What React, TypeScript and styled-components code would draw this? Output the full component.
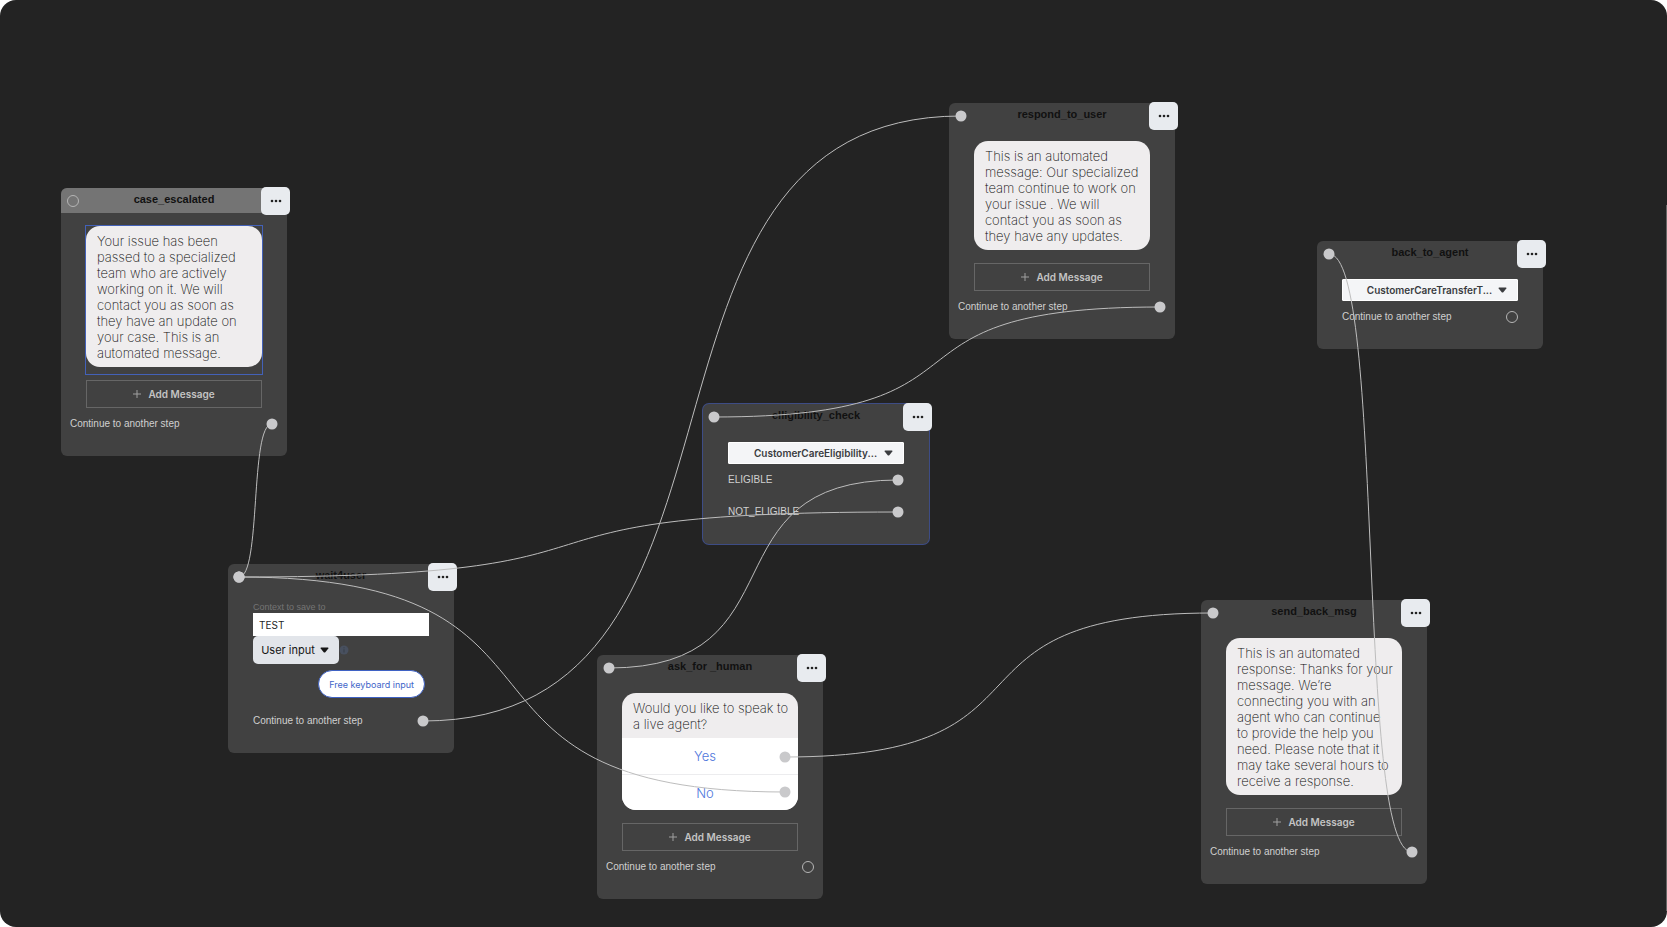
import React, { useId } from "react";
import styled, { createGlobalStyle, css } from "styled-components";

const GlobalStyle = createGlobalStyle`
  *, *::before, *::after { box-sizing: border-box; }
  html, body { margin: 0; background: #ffffff; }
  button, input, select { font: inherit; margin: 0; }
`;

const sans = `"Liberation Sans", Arial, sans-serif`;
const inter = `Inter, "Liberation Sans", sans-serif`;

const Canvas = styled.main`
  position: relative;
  min-height: 100vh;
  overflow: hidden;
  border-radius: 16px;
  background: #232323;
  font-family: ${sans};
`;

const ScrollEdge = styled.div`
  position: absolute;
  top: 205px;
  right: 0;
  bottom: 16px;
  width: 1px;
  background: #666666;
`;

const Node = styled.section<{ $x: number; $y: number; $selected?: boolean }>`
  position: absolute;
  left: ${(p) => p.$x}px;
  top: ${(p) => p.$y}px;
  width: 226px;
  padding-bottom: 24px;
  border-radius: 6px;
  background: #414141;
  ${(p) => p.$selected && css`box-shadow: 0 0 0 1px #3d4c85;`}
`;

const NodeHeader = styled.header<{ $active?: boolean }>`
  display: flex;
  align-items: center;
  justify-content: center;
  height: 25px;
  padding-bottom: 4px;
  border-radius: 6px 6px 0 0;
  background: ${(p) => (p.$active ? "#747474" : "transparent")};
`;

const NodeTitle = styled.h2`
  margin: 0;
  font-size: 11px;
  line-height: 14px;
  font-weight: 700;
  color: #111111;
`;

const MenuButton = styled.button`
  position: absolute;
  top: -1px;
  right: -3px;
  display: flex;
  align-items: center;
  justify-content: center;
  width: 29px;
  height: 28px;
  padding: 0;
  border: 0;
  border-radius: 5px;
  background: #e8ebef;
`;

const NodeBody = styled.div`
  display: flex;
  flex-direction: column;
  padding: 13px 25px 0;
`;

const Bubble = styled.div`
  overflow: hidden;
  border-radius: 14px;
  background: #efedee;
  color: #0c0c0c;
  font-family: ${inter};
  font-weight: 200;
  font-size: 13px;
  line-height: 16px;
`;

const BubbleFrame = styled.div<{ $selected?: boolean }>`
  ${(p) => p.$selected && css`
    outline: 1px solid #4361b8;
    margin-bottom: -7px;
    padding-bottom: 7px;
  `}
`;

const BubbleText = styled.p`
  margin: 0;
  padding: 7px 8px 6px 11px;
`;

const Choice = styled.button`
  display: block;
  width: 100%;
  height: 36px;
  padding: 0 10px 0 0;
  border: 0;
  background: #ffffff;
  color: #4f76dc;
  font-weight: 300;
  & + & { border-top: 1px solid #ececee; }
`;

const AddButton = styled.button`
  display: flex;
  align-items: center;
  justify-content: center;
  gap: 7px;
  height: 28px;
  margin-top: 13px;
  padding: 0;
  border: 1px solid #666666;
  background: transparent;
  color: #c4c4c4;
  font-family: ${inter};
  font-size: 10px;
  font-weight: 600;
`;

const StepRow = styled.div<{ $wide?: boolean; $gap: number }>`
  display: flex;
  align-items: center;
  height: 16px;
  margin: ${(p) => p.$gap}px ${(p) => (p.$wide ? "-16px" : "0")} 0;
  font-size: 10px;
  line-height: 16px;
  color: #d0d0d0;
`;

const StepSelect = styled.div`
  position: relative;
  display: flex;
  height: 22px;
  color: #3a3c3f;
  & > svg { position: absolute; right: 11px; top: 8px; pointer-events: none; }
`;

const SelectBox = styled.select`
  width: 100%;
  padding: 0 22px 0 21px;
  appearance: none;
  border: 1px solid #ffffff;
  border-radius: 1px;
  background: #f4f5f7;
  color: inherit;
  font-family: ${inter};
  font-size: 10px;
  font-weight: 600;
  text-align: center;
  text-align-last: center;
`;

const FieldLabel = styled.label`
  font-size: 9px;
  line-height: 11px;
  color: #747474;
`;

const TextInput = styled.input`
  width: 100%;
  height: 23px;
  padding: 0 5px;
  border: 1px solid #ffffff;
  border-radius: 0;
  background: #ffffff;
  color: #1f1f1f;
  font-family: ${inter};
  font-size: 10px;
`;

const InputRow = styled.div`
  display: flex;
  align-items: center;
`;

const InputType = styled.button`
  display: flex;
  align-items: center;
  justify-content: center;
  gap: 5px;
  width: 86px;
  height: 28px;
  padding: 0 2px 0 0;
  border: 0;
  border-radius: 5px;
  background: #e2e5ea;
  color: #161616;
  font-family: ${inter};
  font-size: 11px;
`;

const Pill = styled.button`
  align-self: flex-end;
  height: 28px;
  margin: 6px 4px 0 0;
  padding: 0 10px;
  border: 1px solid #3f62c4;
  border-radius: 14px;
  background: #ffffff;
  color: #3f66c9;
  font-family: ${inter};
  font-size: 9px;
`;

const Wires = styled.svg`
  position: absolute;
  inset: 0;
  width: 100%;
  height: 100%;
  overflow: visible;
  pointer-events: none;
`;

const Caret = () => (
  <svg width="9" height="6" viewBox="0 0 9 6" aria-hidden="true">
    <path d="M1 .5h7q.8.3.3 1L5.300 5.200q-.8.700-1.600 0L.7 1.500Q.2.800 1 .5Z" fill="currentColor" />
  </svg>
);

const Plus = () => (
  <svg width="8" height="8" viewBox="0 0 8 8" aria-hidden="true">
    <path d="M4 0v8M0 4h8" stroke="#a0a0a0" strokeWidth="1" />
  </svg>
);

const Info = () => (
  <svg width="10" height="10" viewBox="0 0 10 10" aria-hidden="true">
    <circle cx="5" cy="5" r="4.500" fill="#48505f" />
    <path d="M5 4.200v3.300M5 2.200v1" stroke="#3b414c" strokeWidth="1.200" />
  </svg>
);

type StepNodeProps = {
  x: number;
  y: number;
  title: string;
  active?: boolean;
  selected?: boolean;
  children: React.ReactNode;
};

function StepNode({ x, y, title, active, selected, children }: StepNodeProps) {
  return (
    <Node $x={x} $y={y} $selected={selected}>
      <NodeHeader $active={active}>
        <NodeTitle>{title}</NodeTitle>
      </NodeHeader>
      <MenuButton aria-label={`${title} options`}>
        <svg width="12" height="4" viewBox="0 0 12 4" aria-hidden="true" fill="#222">
          <circle cx="2" cy="2" r="1.300" />
          <circle cx="6" cy="2" r="1.300" />
          <circle cx="10" cy="2" r="1.300" />
        </svg>
      </MenuButton>
      <NodeBody>{children}</NodeBody>
    </Node>
  );
}

type MessageProps = { text: string; choices?: string[]; selected?: boolean };

function Message({ text, choices = [], selected }: MessageProps) {
  return (
    <>
      <BubbleFrame $selected={selected}>
        <Bubble>
          <BubbleText>{text}</BubbleText>
          {choices.map((c) => (
            <Choice key={c}>{c}</Choice>
          ))}
        </Bubble>
      </BubbleFrame>
      <AddButton>
        <Plus />
        Add Message
      </AddButton>
      <StepRow $wide $gap={8}>Continue to another step</StepRow>
    </>
  );
}

function ActionSelect({ label }: { label: string }) {
  return (
    <StepSelect>
      <SelectBox aria-label="Action">
        <option>{label}</option>
      </SelectBox>
      <Caret />
    </StepSelect>
  );
}

type Point = [number, number];

const links: [Point, Point][] = [
  [[272, 424], [239, 577]],
  [[423, 721], [961, 116]],
  [[785, 792], [239, 577]],
  [[898, 512], [239, 577]],
  [[898, 480], [609, 668]],
  [[1160, 307], [714, 417]],
  [[785, 757], [1213, 613]],
  [[1412, 852], [1329, 254]],
];

const openPorts: Point[] = [[73, 201], [808, 867], [1512, 317]];

const CURVE = 0.68;

const wire = ([x1, y1]: Point, [x2, y2]: Point) => {
  const reach = (x2 - x1) * CURVE;
  return `M${x1} ${y1}C${x1 + reach} ${y1} ${x2 - reach} ${y2} ${x2} ${y2}`;
};

export default function App() {
  const contextId = useId();
  return (
    <>
      <GlobalStyle />
      <Canvas>
        <StepNode x={61} y={188} title="case_escalated" active>
          <Message
            selected
            text="Your issue has been passed to a specialized team who are actively working on it. We will contact you as soon as they have an update on your case. This is an automated message."
          />
        </StepNode>
        <StepNode x={949} y={103} title="respond_to_user">
          <Message text="This is an automated message: Our specialized team continue to work on your issue . We will contact you as soon as they have any updates." />
        </StepNode>
        <StepNode x={1317} y={241} title="back_to_agent">
          <ActionSelect label="CustomerCareTransferT..." />
          <StepRow $gap={8}>Continue to another step</StepRow>
        </StepNode>
        <StepNode x={703} y={404} title="elligibility_check" selected>
          <ActionSelect label="CustomerCareEligibility..." />
          <StepRow $gap={8}>ELIGIBLE</StepRow>
          <StepRow $gap={16}>NOT_ELIGIBLE</StepRow>
        </StepNode>
        <StepNode x={228} y={564} title="wait4user">
          <FieldLabel htmlFor={contextId}>Context to save to</FieldLabel>
          <TextInput id={contextId} defaultValue="TEST" />
          <InputRow>
            <InputType>
              User input
              <Caret />
            </InputType>
            <Info />
          </InputRow>
          <Pill>Free keyboard input</Pill>
          <StepRow $gap={15}>Continue to another step</StepRow>
        </StepNode>
        <StepNode x={597} y={655} title="ask_for _human">
          <Message text="Would you like to speak to a live agent?" choices={["Yes", "No"]} />
        </StepNode>
        <StepNode x={1201} y={600} title="send_back_msg">
          <Message text="This is an automated response: Thanks for your message. We’re connecting you with an agent who can continue to provide the help you need. Please note that it may take several hours to receive a response." />
        </StepNode>
        <Wires aria-hidden="true">
          {links.map(([a, b]) => (
            <path key={`${a}-${b}`} d={wire(a, b)} fill="none" stroke="#bdbdbd" />
          ))}
          {links.flat().map(([x, y], i) => (
            <circle key={i} cx={x} cy={y} r="5.500" fill="#c9c9cb" />
          ))}
          {openPorts.map(([x, y]) => (
            <circle key={x} cx={x} cy={y} r="5.500" fill="none" stroke="#b5b5b5" />
          ))}
        </Wires>
        <ScrollEdge />
      </Canvas>
    </>
  );
}
